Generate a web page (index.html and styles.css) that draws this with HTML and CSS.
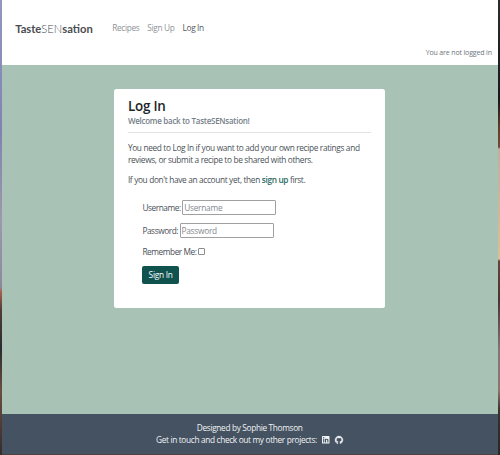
FILE: index.html
```
<!DOCTYPE html>
<html lang="en">
<head>
<meta charset="utf-8">
<title>TasteSENsation</title>
<link rel="stylesheet" href="styles.css">
</head>
<body>
<div class="page">
  <header>
    <div class="navbar">
      <a class="brand">Taste<span>SEN</span>sation</a>
      <nav><a>Recipes</a><a>Sign Up</a><a class="active">Log In</a></nav>
    </div>
    <p class="status">You are not logged in</p>
  </header>
  <main>
    <section class="card">
      <h1>Log In</h1>
      <h2>Welcome back to TasteSENsation!</h2>
      <hr>
      <p class="intro">You need to Log In if you want to add your own recipe ratings and<br>reviews, or submit a recipe to be shared with others.</p>
      <p class="account">If you don't have an account yet, then <a>sign up</a> first.</p>
      <form>
        <div class="row"><label for="user">Username:</label><input class="field" id="user" type="text" placeholder="Username"></div>
        <div class="row"><label for="pass">Password:</label><input class="field" id="pass" type="password" placeholder="Password"></div>
        <div class="row remember"><label for="remember">Remember Me:</label><input class="check" id="remember" type="checkbox"></div>
        <button type="button">Sign In</button>
      </form>
    </section>
  </main>
  <footer>
    <p class="designed">Designed by Sophie Thomson</p>
    <div class="contact"><span>Get in touch and check out my other projects:</span>
      <svg viewBox="0 0 448 448"><path fill="currentColor" fill-rule="evenodd" d="M32 0h384a32 32 0 0 1 32 32v384a32 32 0 0 1-32 32H32a32 32 0 0 1-32-32V32A32 32 0 0 1 32 0zM69 170v214h66V170zM102 64a38 38 0 1 0 0 76 38 38 0 0 0 0-76zM177 170v214h66V278c0-28 5-55 40-55s35 32 35 57v104h66V267c0-58-12-102-80-102-32 0-54 18-63 35h-1v-30z"/></svg>
      <svg class="github" viewBox="0 0 16 16"><path fill="currentColor" stroke="currentColor" stroke-width=".6" d="M8 0C3.58 0 0 3.58 0 8c0 3.54 2.29 6.53 5.47 7.59.4.07.55-.17.55-.38 0-.19-.01-.82-.01-1.49-2.01.37-2.53-.49-2.69-.94-.09-.23-.48-.94-.82-1.13-.28-.15-.68-.52-.01-.53.63-.01 1.08.58 1.23.82.72 1.21 1.87.87 2.33.66.07-.52.28-.87.51-1.07-1.78-.2-3.64-.89-3.64-3.95 0-.87.31-1.59.82-2.15-.08-.2-.36-1.02.08-2.12 0 0 .67-.21 2.2.82.64-.18 1.32-.27 2-.27s1.36.09 2 .27c1.53-1.04 2.2-.82 2.2-.82.44 1.1.16 1.92.08 2.12.51.56.82 1.27.82 2.15 0 3.07-1.87 3.75-3.65 3.95.29.25.54.73.54 1.48 0 1.07-.01 1.93-.01 2.2 0 .21.15.46.55.38A8.01 8.01 0 0 0 16 8c0-4.42-3.58-8-8-8z"/></svg>
    </div>
  </footer>
</div>
</body>
</html>
```
FILE: styles.css
```
* { box-sizing: border-box; margin: 0; }
body {
  height: 455px;
  overflow: hidden;
  display: grid;
  grid-template-columns: 1.6px 1fr 2.2px;
  background: #51443f;
  font-family: "Open Sans", "Noto Sans", sans-serif;
  font-size: 8.3px;
  letter-spacing: -.34px;
  color: #495057;
}
body::before, body::after { content: ""; }
body::before { background: linear-gradient(#9297c0, #7f83ae 130px, #9d98ac 220px, #8b899c 287px, #a66047 292px, #503c38 310px, #2c2b30 350px, #6b4e42 390px, #352c2b); }
body::after { background: linear-gradient(#2b2e2c, #171817 100px, #64402a 130px, #6d4a36 147px, #c2aea0 149px, #d5c195 259px, #65453a 261px, #493431 300px, #827573 350px, #8c7770 390px, #37322a 410px, #292720); }
.page { height: 454px; display: flex; flex-direction: column; }
header { height: 65px; background: #fff; padding: 20px 6px 0 13.6px; }
.navbar { display: flex; height: 17px; }
.brand { width: 97px; font: 700 11.2px/18px Lato, sans-serif; letter-spacing: 0; color: #4a4c50; }
.brand span { font-weight: 300; }
nav { display: flex; gap: 8px; line-height: 15px; color: #8e9297; }
nav .active { color: #53575b; }
.status { margin-top: 10px; text-align: right; font-size: 7px; letter-spacing: -.15px; line-height: 12px; color: #6c757d; }
main { flex: 1; background: #a8c2b6; padding: 24px 112px 0; }
.card { width: 271.5px; height: 218.5px; margin-left: .3px; padding: 9px 14px; border-radius: 2.5px; background: #fff; }
h1 { font-size: 13.4px; letter-spacing: -.2px; font-weight: 600; line-height: 17px; color: #212529; }
h2 { font-size: 8px; letter-spacing: -.27px; font-weight: 600; line-height: 12px; color: #76808a; }
hr { margin: 5px 0 9px; border: 0; border-top: 1px solid #e3e3e3; }
.intro, .account { line-height: 12px; white-space: nowrap; }
.account { margin-top: 8px; }
.account a { color: #2c6a60; font-weight: 600; }
form { padding: 13.5px 0 0 14.5px; }
.row { display: flex; align-items: center; gap: 1.5px; height: 16px; margin-bottom: 6.5px; }
.row label { letter-spacing: -.44px; }
.field { width: 94px; height: 15px; padding: 0 1px; border: 1px solid #a0a0a0; border-radius: 1px; font: inherit; letter-spacing: -.25px; }
.field::placeholder { color: #85898e; }
.remember { height: 13px; margin: 0 0 8px; }
.check { appearance: none; width: 7px; height: 7px; border: 1px solid #8b8b8b; border-radius: 1px; background: #fff; }
button { display: block; width: 36.5px; height: 18px; padding: 0; border: 0; border-radius: 2px; background: #0f524e; color: #fff; font: inherit; letter-spacing: -.25px; }
footer { height: 40px; padding-top: 8px; background: #445261; color: #f1f3f5; line-height: 12px; text-align: center; }
.contact { display: flex; justify-content: center; align-items: center; }
.contact svg { width: 7.5px; height: 7.5px; margin-left: 5.5px; }
.contact .github { width: 8px; height: 8px; overflow: visible; }
```
